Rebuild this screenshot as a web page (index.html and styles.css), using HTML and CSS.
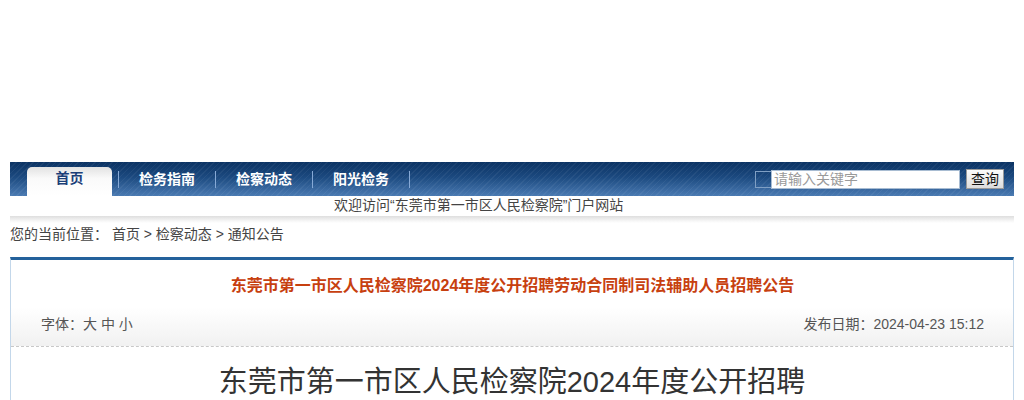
FILE: index.html
```html
<!DOCTYPE html>
<html lang="zh-CN">
<head>
    <meta charset="UTF-8">
    <meta name="viewport" content="width=device-width, initial-scale=1.0">
    <title>东莞市第一市区人民检察院</title>
    <link rel="stylesheet" href="styles.css">
</head>
<body>
    <div class="wrap">
        <div class="banner"></div>

        <div class="nav">
            <ul class="menu">
                <li class="current"><a href="#">首页</a></li>
                <li class="sep"></li>
                <li><a href="#">检务指南</a></li>
                <li class="sep"></li>
                <li><a href="#">检察动态</a></li>
                <li class="sep"></li>
                <li><a href="#">阳光检务</a></li>
                <li class="sep"></li>
            </ul>
            <form class="search">
                <span class="search-icon"></span>
                <input type="text" class="search-input" placeholder="请输入关键字">
                <button type="button" class="search-btn">查询</button>
            </form>
        </div>

        <div class="welcome">欢迎访问“东莞市第一市区人民检察院”门户网站</div>
        <div class="shadow"></div>

        <div class="crumb">
            您的当前位置：
            <a href="#">首页</a> &gt; <a href="#">检察动态</a> &gt; <a href="#">通知公告</a>
        </div>

        <div class="article">
            <div class="art-head">
                <h2 class="art-title">东莞市第一市区人民检察院2024年度公开招聘劳动合同制司法辅助人员招聘公告</h2>
                <div class="art-info">
                    <div class="font-size">字体：<a href="#">大</a> <a href="#">中</a> <a href="#">小</a></div>
                    <div class="pub-date">发布日期：2024-04-23 15:12</div>
                </div>
            </div>
            <div class="art-body">
                <h1 class="doc-title">东莞市第一市区人民检察院2024年度公开招聘劳动合同制司法辅助人员招聘公告</h1>
            </div>
        </div>
    </div>
</body>
</html>
```

FILE: styles.css
```css
body {
    margin: 0;
    font-family: "Liberation Sans", "Noto Sans CJK SC", sans-serif;
    font-size: 14px;
    color: #333;
    background-color: #fff;
}

a {
    color: inherit;
    text-decoration: none;
}

.wrap {
    width: 1004px;
    margin: 0 auto;
}

.banner {
    height: 162px;
}

/* nav bar */
.nav {
    height: 34px;
    display: flex;
    align-items: center;
    justify-content: space-between;
    background:
        repeating-linear-gradient(135deg, rgba(255, 255, 255, 0.05) 0 1px, transparent 1px 4px),
        linear-gradient(to bottom, #0b3363 0%, #1c4a80 45%, #4a7ab2 100%);
}

.menu {
    list-style: none;
    margin: 0;
    padding: 0 0 0 17px;
    display: flex;
    align-items: center;
    height: 100%;
}

.menu li a {
    display: block;
    padding: 0 20px;
    font-size: 14px;
    font-weight: bold;
    color: #fff;
    line-height: 34px;
}

.menu li.current {
    align-self: flex-end;
    width: 85px;
    height: 29px;
    margin-right: 6px;
    border-radius: 5px 5px 0 0;
    background: linear-gradient(to bottom, #e2e2e2 0%, #fafafa 40%, #fff 100%);
    text-align: center;
}

.menu li.current a {
    padding: 0;
    color: #1b3f78;
    line-height: 22px;
}

.menu li.sep {
    width: 1px;
    height: 17px;
    background-color: #86a9d6;
}

.search {
    display: flex;
    align-items: center;
    margin: 0 10px 0 0;
}

.search-icon {
    width: 15px;
    height: 15px;
    border: 1px solid #7f9fc4;
    border-right: none;
}

.search-input {
    width: 183px;
    height: 15px;
    padding: 1px 2px;
    border: 1px solid #a8bcd2;
    font-family: inherit;
    font-size: 14px;
    color: #333;
    outline: none;
}

.search-input::placeholder {
    color: #9a9a9a;
}

.search-btn {
    margin-left: 6px;
    width: 38px;
    height: 20px;
    padding: 0;
    border: 1px solid #9a9a9a;
    background: linear-gradient(to bottom, #fbfbfb, #dcdcdc);
    font-family: inherit;
    font-size: 14px;
    color: #111;
    line-height: 18px;
}

.welcome {
    height: 20px;
    line-height: 18px;
    padding-left: 324px;
    color: #444;
}

.shadow {
    height: 7px;
    background: linear-gradient(to bottom, #dedede, #f6f6f6 70%, #fff);
}

.crumb {
    line-height: 22px;
    margin-bottom: 12px;
    color: #444;
}

/* article */
.article {
    border: 1px solid #c3d7ea;
    border-top: 3px solid #23619b;
}

.art-head {
    padding: 16px 29px 12px 30px;
    border-bottom: 1px dashed #c8c8c8;
    background: linear-gradient(to bottom, #fff 0%, #fff 55%, #f1f1f1 100%);
}

.art-title {
    margin: 0 0 18px;
    font-size: 16px;
    line-height: 20px;
    text-align: center;
    color: #c7400f;
}

.art-info {
    display: flex;
    justify-content: space-between;
    line-height: 20px;
    color: #555;
}

.art-body {
    padding: 15px 0 0;
}

.doc-title {
    max-width: 600px;
    margin: 0 auto;
    font-size: 29px;
    font-weight: normal;
    line-height: 40px;
    text-align: center;
    color: #333;
}
```
